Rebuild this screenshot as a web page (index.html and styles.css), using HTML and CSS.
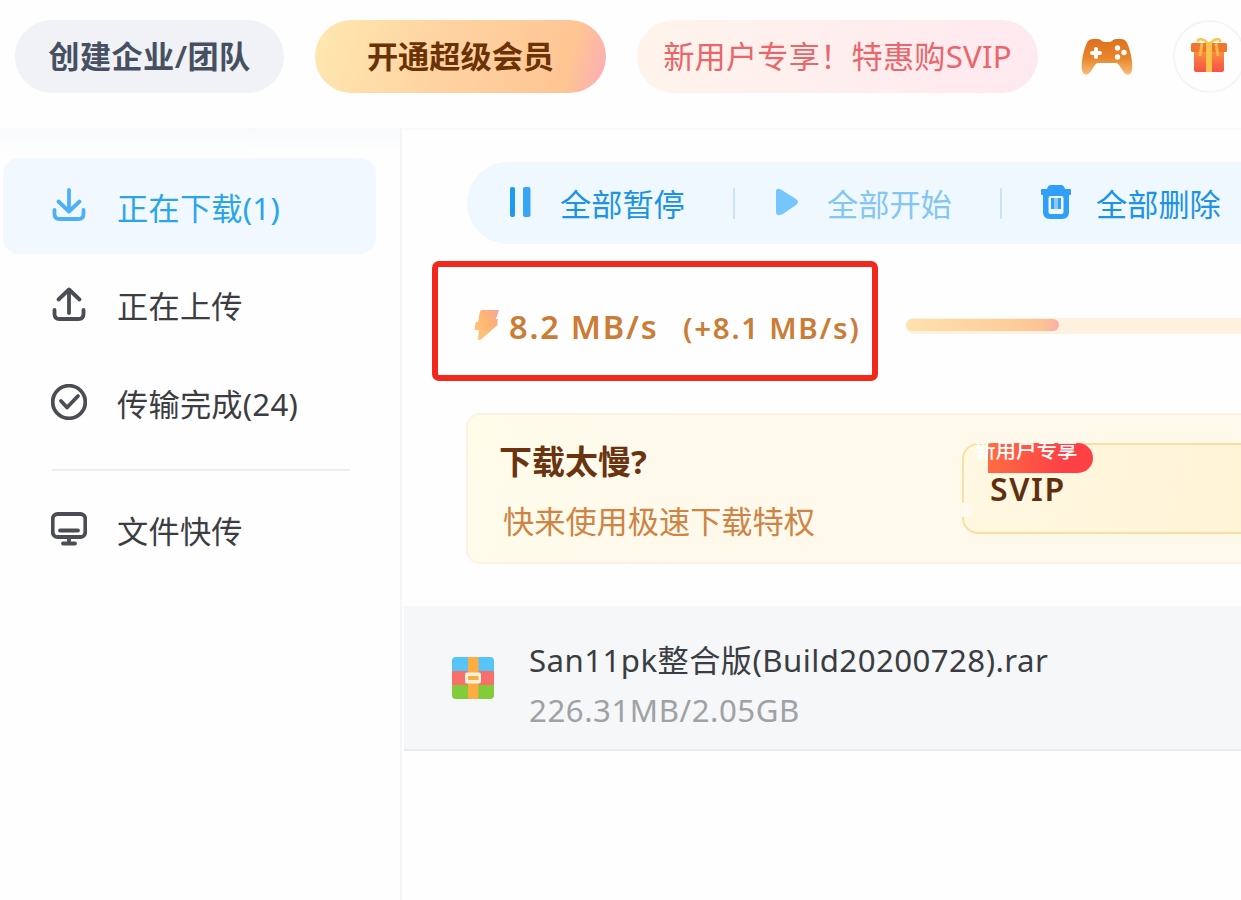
FILE: index.html
```
<!DOCTYPE html>
<html lang="zh-CN">
<head>
    <meta charset="UTF-8">
    <meta name="viewport" content="width=device-width, initial-scale=1.0">
    <title>传输列表</title>
    <link rel="stylesheet" href="styles.css">
</head>
<body>
    <header class="header">
        <button class="pill pill-team"><span>创建企业/团队</span></button>
        <button class="pill pill-vip"><span>开通超级会员</span></button>
        <button class="pill pill-promo"><span>新用户专享！特惠购SVIP</span></button>
        <svg class="icon-game" viewBox="0 0 52 38">
            <defs>
                <linearGradient id="gameFill" x1="0" y1="0" x2="0" y2="1">
                    <stop offset="0" stop-color="#e0701c"/>
                    <stop offset="0.55" stop-color="#e8862c"/>
                    <stop offset="1" stop-color="#f9bd78"/>
                </linearGradient>
            </defs>
            <path fill="url(#gameFill)" d="M12 1h5c3 0 4 3 6 3h6c2 0 3-3 6-3h5c4 0 6 3 7 6 3 8 5 18 4 25-1 6-6 6-9 1l-4-6q-1-2-3-2H17q-2 0-3 2l-4 6c-3 5-8 5-9-1C0 25 2 15 5 7c1-3 3-6 7-6z"/>
            <path stroke="#fff" stroke-width="4" stroke-linecap="round" d="M15 11v8M11 15h8"/>
            <g fill="#fff"><circle cx="36.5" cy="10" r="2.7"/><circle cx="43" cy="14.5" r="2.7"/><circle cx="36.5" cy="19" r="2.7"/></g>
        </svg>
        <div class="gift">
            <svg viewBox="0 0 38 36">
                <defs>
                    <linearGradient id="giftFill" x1="0" y1="0" x2="0" y2="1">
                        <stop offset="0" stop-color="#f59a40"/>
                        <stop offset="1" stop-color="#fa5046"/>
                    </linearGradient>
                </defs>
                <path fill="url(#giftFill)" d="M4 10h30v22q0 2-2 2H6q-2 0-2-2z"/>
                <rect x="1" y="5" width="36" height="9" rx="1.5" fill="#ef762f"/>
                <path fill="none" stroke="#fcc348" stroke-width="2.5" d="M18 6C14 0 7 0 8 4M20 6c4-6 11-6 10-2"/>
                <path fill="#fcc348" d="M16 4h6v30h-6z"/>
                <path stroke="#fcb644" stroke-width="3" d="M12 5l-2 13M26 5l2 13"/>
            </svg>
        </div>
    </header>

    <div class="layout">
        <aside class="sidebar">
            <a class="menu-item active">
                <svg class="menu-icon" viewBox="0 0 36 36">
                    <path d="M18 2v20M7.500 13.500L18 23.500l10.500-10M3.500 22v4q0 5 5 5h19q5 0 5-5v-4"/>
                </svg>
                <span>正在下载(1)</span>
            </a>
            <a class="menu-item">
                <svg class="menu-icon" viewBox="0 0 36 36">
                    <path d="M18 27V4M7.500 13.500L18 3.500l10.500 10M3.500 24v4q0 5 5 5h19q5 0 5-5v-4"/>
                </svg>
                <span>正在上传</span>
            </a>
            <a class="menu-item">
                <svg class="menu-icon" viewBox="0 0 36 36">
                    <circle cx="18" cy="18" r="16.300"/>
                    <path d="M10 17l6 6.500L27 12"/>
                </svg>
                <span>传输完成(24)</span>
            </a>
            <hr class="menu-line">
            <a class="menu-item">
                <svg class="menu-icon" viewBox="0 0 36 36">
                    <rect x="1.700" y="3" width="32.600" height="23" rx="5"/>
                    <path d="M9 19.500h18M18 27v5M12 32.500h12"/>
                </svg>
                <span>文件快传</span>
            </a>
        </aside>

        <main class="main">
            <div class="toolbar">
                <a class="tool tool-pause">
                    <svg viewBox="0 0 24 32" width="24" height="32">
                        <rect x="2" y="1" width="5" height="30" rx="2" fill="#1f9af2"/>
                        <rect x="15" y="1" width="7.500" height="30" rx="2" fill="#38a5f6"/>
                    </svg>
                    <span>全部暂停</span>
                </a>
                <i class="tool-line"></i>
                <a class="tool tool-start">
                    <svg viewBox="0 0 24 28" width="24" height="28">
                        <path fill="#76c6fd" d="M1 3q0-3 4-2l16 10q4 3 0 6L8 26q-7 3-7-2z"/>
                    </svg>
                    <span>全部开始</span>
                </a>
                <i class="tool-line"></i>
                <a class="tool tool-delete">
                    <svg viewBox="0 0 32 36" width="32" height="36">
                        <path fill="#2f9ff7" d="M11 1h10q3 0 4 4h5q1 0 1 1v4q0 1-1 1h-1v17q0 7-7 7H10q-7 0-7-7V11H2q-1 0-1-1V6q0-1 1-1h5q1-4 4-4z"/>
                        <rect x="8.500" y="12" width="15" height="18" rx="2" fill="#f0f9ff"/>
                        <path fill="#2f9ff7" d="M11 14h3.500v11H11zM17.500 14H21v11h-3.500z"/>
                        <path fill="#8bcbfb" d="M14.500 14h3v11h-3z"/>
                    </svg>
                    <span>全部删除</span>
                </a>
            </div>

            <div class="speed-row">
                <div class="speed-box">
                    <svg class="bolt" viewBox="0 0 26 32">
                        <defs>
                            <linearGradient id="boltFill" x1="0" y1="1" x2="1" y2="0">
                                <stop offset="0" stop-color="#ffc97c"/>
                                <stop offset="0.6" stop-color="#fdb472"/>
                                <stop offset="1" stop-color="#f7a3a0"/>
                            </linearGradient>
                        </defs>
                        <path fill="url(#boltFill)" d="M8 1h16q1 0 .7 1L22 10h1q1.500 0 .5 1.500V16L7 30.500q-3 2-3-1L5 21H2q-2 0-1.500-2L2 13h2L6 2.500Q6.500 1 8 1z"/>
                    </svg>
                    <span class="speed">8.2 MB/s</span>
                    <span class="speed-extra">(+8.1 MB/s)</span>
                </div>
                <div class="progress"><div class="progress-value"></div></div>
            </div>

            <div class="banner">
                <div class="banner-text">
                    <h3>下载太慢?</h3>
                    <p>快来使用极速下载特权</p>
                </div>
                <div class="svip">
                    <span class="svip-badge"><span>新用户专享</span></span>
                    <span class="svip-name">SVIP</span>
                </div>
            </div>

            <div class="file-row">
                <svg class="file-icon" viewBox="0 0 42 42">
                    <path fill="#56c4f6" d="M4 0h34q4 0 4 4v10H0V4q0-4 4-4z"/>
                    <path fill="#f96f6c" d="M0 14h42v14H0z"/>
                    <path fill="#83cc39" d="M0 28h42v10q0 4-4 4H4q-4 0-4-4z"/>
                    <path fill="#fbad42" d="M16 0h10.500v42H16z"/>
                    <rect x="13" y="15.500" width="16" height="11" rx="2" fill="#fff3dc"/>
                    <rect x="16" y="19" width="10.500" height="4" fill="#fbad42"/>
                </svg>
                <div class="file-info">
                    <div class="file-name">San11pk整合版(Build20200728).rar</div>
                    <div class="file-size">226.31MB/2.05GB</div>
                </div>
            </div>
        </main>
    </div>
</body>
</html>
```
FILE: styles.css
```
* {
    box-sizing: border-box;
}
body {
    margin: 0;
    height: 900px;
    overflow: hidden;
    background: #fefefe;
    color: #3b3d42;
    font-family: "Noto Sans", "Noto Sans CJK SC", sans-serif;
    font-size: 31.2px;
    line-height: 40px;
    white-space: nowrap;
}
h3, p {
    margin: 0;
}
svg {
    display: block;
    flex-shrink: 0;
}

/* header */
.header {
    display: flex;
    align-items: center;
    width: 1260px;
    height: 128px;
    padding: 0 0 15px 15px;
}
.pill {
    height: 73px;
    padding: 0;
    border: none;
    border-radius: 37px;
    font: inherit;
    flex-shrink: 0;
}
.pill span {
    position: relative;
    top: -1px;
}
.pill-team {
    width: 269px;
    background: #f0f2f6;
    color: #465062;
    font-weight: 600;
    letter-spacing: 0.4px;
}
.pill-vip {
    width: 291px;
    margin-left: 31px;
    background: linear-gradient(105deg, #ffe5ae 5%, #ffd4a2 42%, #ffc593 86%, #fbb0b0 97%);
    color: #6b3206;
    font-weight: 600;
}
.pill-promo {
    width: 401px;
    margin-left: 31px;
    background: linear-gradient(100deg, #fff4ec, #ffeeee 50%, #ffe9f0);
    color: #e9666b;
    letter-spacing: 0.2px;
}
.icon-game {
    width: 52px;
    height: 38px;
    margin-left: 43px;
}
.gift {
    display: flex;
    align-items: center;
    justify-content: center;
    width: 73px;
    height: 73px;
    margin-left: 40px;
    border: 2px solid #f5f5f6;
    border-radius: 50%;
    flex-shrink: 0;
}
.gift svg {
    width: 38px;
    height: 36px;
    margin: 0 2px 1px 0;
}

.layout {
    display: flex;
    height: 772px;
}

/* sidebar */
.sidebar {
    display: flex;
    flex-direction: column;
    width: 402px;
    padding: 30px 24px 0 3px;
    background: linear-gradient(#f9fafc, #fefefe 30px);
    border-right: 2px solid #f4f5f6;
    flex-shrink: 0;
}
.menu-item {
    display: flex;
    align-items: center;
    height: 96px;
    margin-bottom: 2px;
    padding-left: 48px;
    border-radius: 16px;
}
.menu-item.active {
    background: #f1f8ff;
    color: #2ba5ea;
}
.menu-item span {
    margin: 4px 0 0 30px;
    letter-spacing: 0.25px;
}
.menu-icon {
    width: 36px;
    height: 36px;
    fill: none;
    stroke: #4b4d55;
    stroke-width: 3.8;
    stroke-linecap: round;
    stroke-linejoin: round;
}
.active .menu-icon {
    stroke: #4fb0fa;
}
.menu-line {
    width: 298px;
    height: 2px;
    margin: 17px 0 10px 49px;
    border: none;
    background: #eeeef0;
}

/* main */
.main {
    flex: 1;
    min-width: 0;
    padding-top: 34px;
    border-top: 2px solid #f9fafa;
    overflow: hidden;
}
.toolbar {
    display: flex;
    align-items: center;
    height: 82px;
    margin: -2px 0 0 65px;
    padding-left: 41px;
    background: #eff8ff;
    border-radius: 41px 0 0 41px;
}
.tool {
    display: flex;
    align-items: center;
    color: #1d93e6;
}
.tool svg {
    margin-bottom: 3px;
}
.tool span {
    width: 124px;
    margin: 1px 0 0 28px;
}
.tool-start {
    color: #84c6f2;
}
.tool-delete span {
    margin-left: 24px;
}
.tool-line {
    width: 2px;
    height: 31px;
    margin: 0 40px 0 49px;
    background: #c9e4f8;
}
.tool-start + .tool-line {
    margin-right: 38px;
}

.speed-row {
    display: flex;
    align-items: center;
    width: 880px;
    height: 120px;
    margin: 17px 0 0 30px;
}
.speed-box {
    display: flex;
    align-items: center;
    width: 446px;
    height: 120px;
    padding: 8px 0 0 36px;
    border: 6px solid #f3271c;
    border-radius: 7px;
    color: #ca7d36;
    font-weight: 600;
    flex-shrink: 0;
}
.bolt {
    width: 26px;
    height: 32px;
}
.speed {
    width: 183px;
    margin-top: 3px;
    padding-left: 9px;
    font-size: 32.5px;
    letter-spacing: 1.8px;
}
.speed-extra {
    margin-top: 5px;
    font-size: 29.5px;
    letter-spacing: 1.7px;
}
.progress {
    width: 400px;
    height: 16px;
    margin: 9px 0 0 28px;
    padding-top: 1px;
    background: #fff1e0;
    border-radius: 8px;
}
.progress-value {
    width: 153px;
    height: 12px;
    border-radius: 6px;
    background: linear-gradient(90deg, #ffe2ae, #fecb98 75%, #fdc196 90%, #f9afa6);
}

.banner {
    display: flex;
    width: 800px;
    height: 151px;
    margin: 32px 0 0 64px;
    background: linear-gradient(100deg, #fffcea, #fff9ec 30%);
    border: 2px solid #fdf3e4;
    border-radius: 14px;
}
.banner-text {
    width: 494px;
    padding: 24px 0 0 31px;
    flex-shrink: 0;
}
.banner h3 {
    color: #6b3410;
    font-size: 33px;
    font-weight: 700;
    line-height: 46px;
}
.banner p {
    margin: 16px 0 0 4px;
    color: #cd8444;
}
.svip {
    position: relative;
    width: 310px;
    height: 91px;
    margin-top: 28px;
    padding: 24px 0 0 26px;
    background: linear-gradient(100deg, #fff8e2, #fff3d5);
    border: 2px solid #fae0a0;
    border-radius: 16px;
    flex-shrink: 0;
    clip-path: inset(0);
}
/* gap in the frame at the left edge */
.svip::before {
    content: "";
    position: absolute;
    left: -2px;
    top: 58px;
    width: 10px;
    height: 14px;
    background: #fffaf0;
    border-radius: 0 10px 8px 0;
}
.svip-badge {
    position: absolute;
    left: 24px;
    top: -2px;
    width: 105px;
    height: 30px;
    background: linear-gradient(100deg, #ff6f42, #ff4146 70%);
    border-radius: 0 15px 15px 0;
}
.svip-badge span {
    display: block;
    margin: -6px 0 0 -13px;
    color: #fff;
    font-size: 20.5px;
    font-weight: 500;
    line-height: 26px;
}
.svip-name {
    color: #5f3010;
    font-weight: 600;
    font-size: 32px;
    letter-spacing: 1.6px;
}

.file-row {
    display: flex;
    align-items: center;
    height: 145px;
    margin: 42px 0 0 2px;
    padding-left: 48px;
    background: #f5f7f9;
    border-bottom: 2px solid #e9ebed;
}
.file-icon {
    width: 42px;
    height: 42px;
    margin-top: 1px;
}
.file-info {
    margin: 14px 0 0 35px;
}
.file-name {
    line-height: 50px;
    letter-spacing: 0.45px;
}
.file-size {
    color: #a0a1a6;
    line-height: 50px;
    letter-spacing: 0.55px;
}
```
